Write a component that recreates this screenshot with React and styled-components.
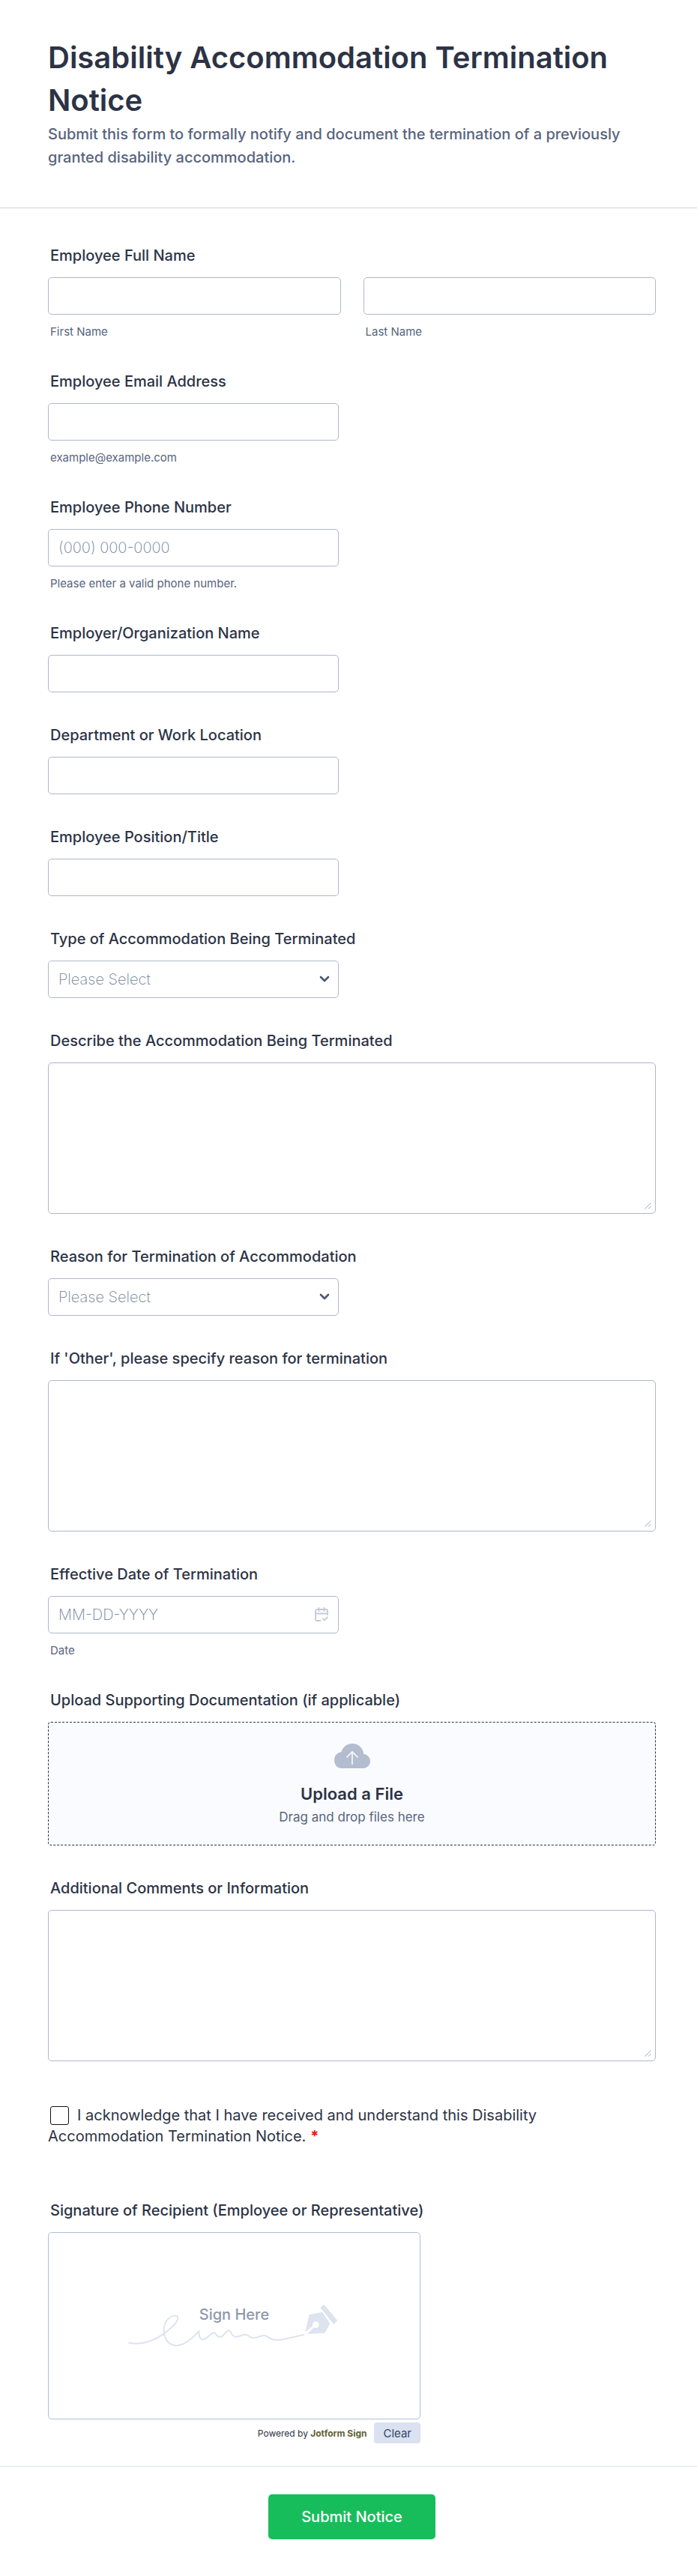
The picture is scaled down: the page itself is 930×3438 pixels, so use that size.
import { useRef, useState } from 'react';
import styled, { createGlobalStyle } from 'styled-components';

const colors = {
  text: '#2c3345',
  muted: '#57647e',
  placeholder: '#6f7f96',
  border: '#afb7c9',
  line: '#cfd2e0',
  pale: '#dde3ef',
  green: '#18bd5b',
};

const GlobalStyle = createGlobalStyle`
  * {
    box-sizing: border-box;
  }
  body {
    margin: 0;
    background: #fff;
    color: ${colors.text};
    font-family: Inter, "Liberation Sans", sans-serif;
    font-size: 20px;
  }
  input, textarea, select, button {
    font: inherit;
  }
`;

const Form = styled.form`
  width: 100%;
`;

const Header = styled.header`
  padding: 48px 55px 51px 64px;
  border-bottom: 1px solid ${colors.line};
`;

const Title = styled.h1`
  margin: 0 0 2px;
  font-size: 40px;
  font-weight: 600;
  line-height: 57px;
`;

const Subtitle = styled.p`
  margin: 0;
  font-weight: 500;
  line-height: 31px;
  color: ${colors.muted};
`;

const Fields = styled.div`
  display: flex;
  flex-direction: column;
  gap: 45px;
  padding: 51px 55px 30px 64px;
`;

const FieldBox = styled.div`
  display: flex;
  flex-direction: column;
`;

const labelStyle = `
  margin: 0 0 17px;
  padding-left: 3px;
  font-weight: 500;
  line-height: 24px;
`;

const Label = styled.label`
  ${labelStyle}
`;

const GroupLabel = styled.div`
  ${labelStyle}
`;

const SubLabel = styled.label`
  display: block;
  margin-top: 14px;
  padding-left: 3px;
  font-size: 15px;
  line-height: 18px;
  color: ${colors.muted};
`;

const NameGrid = styled.div`
  display: grid;
  grid-template-columns: 1fr 1fr;
  gap: 30px;
`;

const Input = styled.input`
  display: block;
  width: 100%;
  max-width: ${(props) => (props.$full ? 'none' : '388px')};
  height: 50px;
  padding: 0 13px;
  border: 1px solid ${colors.border};
  border-radius: 5px;
  background: #fff;
  color: ${colors.text};

  &::placeholder {
    color: ${colors.placeholder};
    font-weight: 200;
    opacity: 1;
  }
`;

const IconField = styled.div`
  position: relative;
  max-width: 388px;

  svg {
    position: absolute;
    top: 50%;
    right: ${(props) => props.$right};
    transform: translateY(-50%);
    pointer-events: none;
  }
`;

const Select = styled.select`
  display: block;
  width: 100%;
  height: 50px;
  padding: 0 40px 0 13px;
  border: 1px solid ${colors.border};
  border-radius: 5px;
  background: #fff;
  color: ${colors.placeholder};
  font-weight: 200;
  appearance: none;
`;

const AreaBox = styled.div`
  position: relative;

  svg {
    position: absolute;
    right: 6px;
    bottom: 6px;
    pointer-events: none;
  }
`;

const TextArea = styled.textarea`
  display: block;
  width: 100%;
  height: 202px;
  padding: 10px 13px;
  border: 1px solid ${colors.border};
  border-radius: 5px;
  background: #fff;
  color: ${colors.text};
  resize: none;
`;

const DropZone = styled.button`
  display: flex;
  flex-direction: column;
  align-items: center;
  width: 100%;
  padding: 28px 16px 25px;
  border: 1px dashed ${colors.text};
  border-radius: 4px;
  background: #fafbfe;
  color: ${colors.text};
  cursor: pointer;
`;

const DropTitle = styled.span`
  margin-top: 20px;
  font-size: 22px;
  font-weight: 600;
  line-height: 28px;
`;

const DropHint = styled.span`
  margin-top: 5px;
  font-size: 17px;
  line-height: 24px;
  color: ${colors.muted};
`;

const Consent = styled.div`
  max-width: 720px;
  margin: 13px 0 28px;
  line-height: 28px;
`;

const Checkbox = styled.input`
  width: 25px;
  height: 25px;
  margin: 0 11px 0 3px;
  border: 1px solid #10121c;
  border-radius: 3px;
  background: #fff;
  vertical-align: -6px;
  appearance: none;

  &:checked {
    background: ${colors.green};
  }
`;

const Required = styled.span`
  margin-left: 6px;
  color: #f2180c;
  font-weight: 700;
`;

const SignatureBox = styled.div`
  max-width: 497px;
`;

const Pad = styled.div`
  display: grid;
  place-content: center;
  height: 250px;
  border: 1px solid #a9c1e2;
  border-radius: 5px;

  > * {
    grid-area: 1 / 1;
  }
`;

const SignHere = styled.span`
  padding-top: 16px;
  font-weight: 500;
  line-height: 28px;
  text-align: center;
  color: #8f97ab;
`;

const PadFooter = styled.div`
  display: flex;
  justify-content: flex-end;
  align-items: center;
  gap: 10px;
  margin-top: 4px;
  font-size: 12px;

  a {
    color: #5f5f33;
    font-weight: 700;
    text-decoration: none;
  }
`;

const ClearButton = styled.button`
  height: 28px;
  padding: 0 12px;
  border: none;
  border-radius: 4px;
  background: #dae1f0;
  color: #34446b;
  font-size: 15px;
`;

const Footer = styled.footer`
  display: flex;
  justify-content: center;
  padding: 37px 55px 49px 64px;
  border-top: 1px solid #dfe3ee;
`;

const SubmitButton = styled.button`
  height: 60px;
  padding: 0 44px;
  border: none;
  border-radius: 5px;
  background: ${colors.green};
  color: #fff;
  font-weight: 500;
`;

const ChevronIcon = () => (
  <svg width="14" height="10" viewBox="0 0 14 10" fill="none" stroke="#4c5672" strokeWidth="2.6" strokeLinecap="round" strokeLinejoin="round">
    <path d="M2 2l5 5 5-5" />
  </svg>
);

const CalendarIcon = () => (
  <svg width="18" height="20" viewBox="0 0 18 20" fill="none" stroke="#c3cad8" strokeWidth="1.8" strokeLinecap="round">
    <path d="M7.5 18H3a2 2 0 0 1-2-2V5a2 2 0 0 1 2-2h12a2 2 0 0 1 2 2v5M1 8.5h16M5.5 1v4M12.5 1v4" />
    <path d="M11 15.3l2 2 4-4" />
  </svg>
);

const ResizeIcon = () => (
  <svg width="9" height="9" viewBox="0 0 9 9" fill="none" stroke="#a4a9b6">
    <path d="M0.5 8.500l8-8M5 8.500l3.500-3.500" />
  </svg>
);

const CloudIcon = () => (
  <svg width="48" height="33" viewBox="0 0 48 33" fill="none">
    <path d="M10 33C4.300 33 0 28.200 0 22.200 0 16.500 4 11.900 9.400 11.300 11.300 4.500 17.300 0 24.300 0c7.800 0 14.200 6 15 14.100C44.200 14.600 48 18.600 48 23.600 48 28.800 43.800 33 38.600 33z" fill="#b4bdcf" />
    <path d="M24 28V11M16.500 18.500L24 11l7.500 7.500" stroke="#fafbfe" strokeWidth="1.600" />
  </svg>
);

const SignatureDrawing = () => (
  <svg width="300" height="90" viewBox="8 0 900 270" fill="none">
    <path
      d="M33 203C90 215 135 196 176 166C207 143 231 119 231 103C231 90 208 94 196 104C176 120 170 151 179 178C187 203 207 217 232 214C264 210 292 182 315 157C317 165 313 186 328 190C347 193 363 162 376 162C383 164 384 180 399 180C418 179 422 153 436 154C446 157 444 178 463 179C480 180 488 169 504 171C517 173 519 185 535 184C550 183 563 173 578 174C592 176 597 190 622 192C656 194 699 176 738 171"
      stroke={colors.pale}
      strokeWidth="6"
    />
    <path
      d="M757 91L809 80L840 126L819 164L748 168L776 142A13 13 0 1 0 771 136L741 160z"
      fill={colors.pale}
    />
    <path d="M801 62L816 50L870 115L855 129z" fill={colors.pale} />
  </svg>
);

const TextField = ({ id, label, hint, ...rest }) => (
  <FieldBox>
    <Label htmlFor={id}>{label}</Label>
    <Input id={id} {...rest} />
    {hint && <SubLabel htmlFor={id}>{hint}</SubLabel>}
  </FieldBox>
);

const SelectField = ({ id, label }) => (
  <FieldBox>
    <Label htmlFor={id}>{label}</Label>
    <IconField $right="12px">
      <Select id={id} defaultValue="">
        <option value="">Please Select</option>
      </Select>
      <ChevronIcon />
    </IconField>
  </FieldBox>
);

const AreaField = ({ id, label }) => (
  <FieldBox>
    <Label htmlFor={id}>{label}</Label>
    <AreaBox>
      <TextArea id={id} />
      <ResizeIcon />
    </AreaBox>
  </FieldBox>
);

const App = () => {
  const fileInput = useRef(null);
  const [agreed, setAgreed] = useState(false);

  return (
    <>
      <GlobalStyle />
      <Form onSubmit={(e) => e.preventDefault()}>
        <Header>
          <Title>Disability Accommodation Termination Notice</Title>
          <Subtitle>
            Submit this form to formally notify and document the termination of a previously
            granted disability accommodation.
          </Subtitle>
        </Header>

        <Fields>
          <FieldBox role="group" aria-labelledby="fullName">
            <GroupLabel id="fullName">Employee Full Name</GroupLabel>
            <NameGrid>
              <div>
                <Input $full id="firstName" />
                <SubLabel htmlFor="firstName">First Name</SubLabel>
              </div>
              <div>
                <Input $full id="lastName" />
                <SubLabel htmlFor="lastName">Last Name</SubLabel>
              </div>
            </NameGrid>
          </FieldBox>

          <TextField id="email" type="email" label="Employee Email Address" hint="example@example.com" />
          <TextField
            id="phone"
            type="tel"
            label="Employee Phone Number"
            placeholder="(000) 000-0000"
            hint="Please enter a valid phone number."
          />
          <TextField id="employer" label="Employer/Organization Name" />
          <TextField id="department" label="Department or Work Location" />
          <TextField id="position" label="Employee Position/Title" />

          <SelectField id="type" label="Type of Accommodation Being Terminated" />
          <AreaField id="describe" label="Describe the Accommodation Being Terminated" />
          <SelectField id="reason" label="Reason for Termination of Accommodation" />
          <AreaField id="other" label="If 'Other', please specify reason for termination" />

          <FieldBox>
            <Label htmlFor="date">Effective Date of Termination</Label>
            <IconField $right="14px">
              <Input id="date" placeholder="MM-DD-YYYY" />
              <CalendarIcon />
            </IconField>
            <SubLabel htmlFor="date">Date</SubLabel>
          </FieldBox>

          <FieldBox>
            <Label htmlFor="upload">Upload Supporting Documentation (if applicable)</Label>
            <DropZone id="upload" type="button" onClick={() => fileInput.current.click()}>
              <CloudIcon />
              <DropTitle>Upload a File</DropTitle>
              <DropHint>Drag and drop files here</DropHint>
            </DropZone>
            <input ref={fileInput} type="file" hidden />
          </FieldBox>

          <AreaField id="comments" label="Additional Comments or Information" />

          <Consent>
            <Checkbox id="agree" type="checkbox" checked={agreed} onChange={(e) => setAgreed(e.target.checked)} />
            <label htmlFor="agree">
              I acknowledge that I have received and understand this Disability Accommodation
              Termination Notice.
            </label>
            <Required>*</Required>
          </Consent>

          <FieldBox role="group" aria-labelledby="signature">
            <GroupLabel id="signature">Signature of Recipient (Employee or Representative)</GroupLabel>
            <SignatureBox>
              <Pad>
                <SignatureDrawing />
                <SignHere>Sign Here</SignHere>
              </Pad>
              <PadFooter>
                <span>
                  Powered by <a href="#sign">Jotform Sign</a>
                </span>
                <ClearButton type="button">Clear</ClearButton>
              </PadFooter>
            </SignatureBox>
          </FieldBox>
        </Fields>

        <Footer>
          <SubmitButton type="submit">Submit Notice</SubmitButton>
        </Footer>
      </Form>
    </>
  );
};

export default App;
